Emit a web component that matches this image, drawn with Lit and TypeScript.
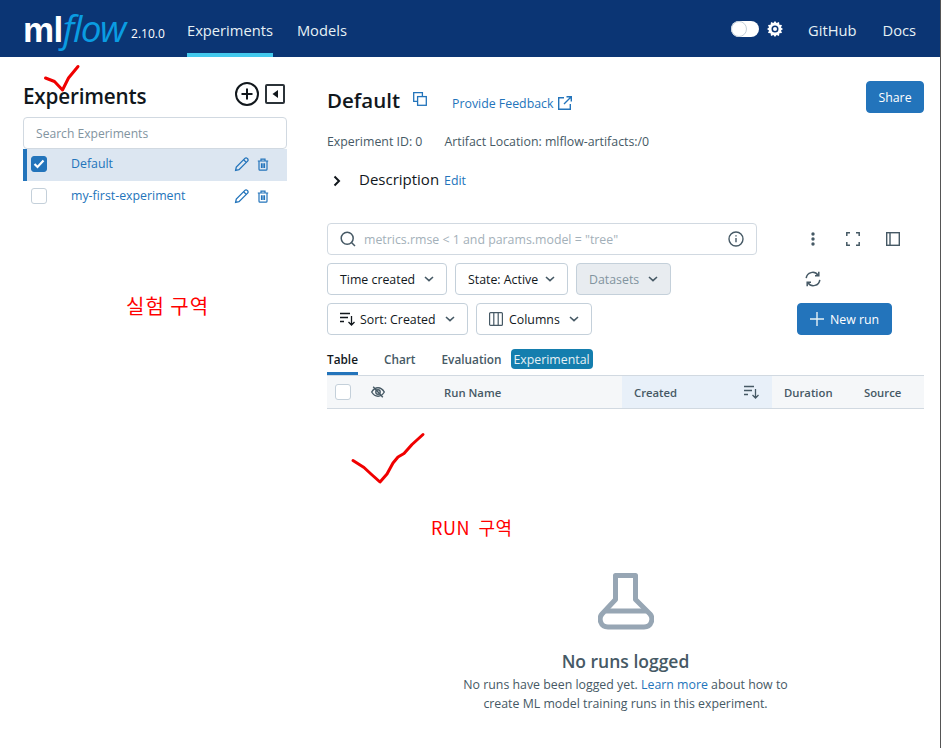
import { LitElement, html, css, svg } from 'lit'
import { customElement } from 'lit/decorators.js'

const chevron = html`<svg class="chev" width="10" height="6" viewBox="0 0 10 6" fill="none" stroke="currentColor" stroke-width="1.6"><path d="M1 1l4 3.6L9 1"/></svg>`

const pencil = html`<svg width="16" height="16" viewBox="0 0 16 16" fill="none" stroke="#2374bb" stroke-width="1.3"><path d="M1.6 14.4l.7-3.4 8.6-8.6a1.6 1.6 0 0 1 2.3 0l.4.4a1.6 1.6 0 0 1 0 2.3L5 13.7z"/><path d="M9.6 3.7l2.7 2.7"/></svg>`

const trash = html`<svg width="12" height="13" viewBox="0 0 12 13" fill="none" stroke="#2374bb" stroke-width="1.2"><path d="M.8 3h10.4M4 3V1.2h4V3M2 3v8.2c0 .6.4 1 1 1h6c.6 0 1-.4 1-1V3M4.500 5.200v4.800M6 5.200v4.800M7.500 5.200v4.800"/></svg>`

const sortIcon = html`<svg width="16" height="14" viewBox="0 0 16 14" fill="none" stroke="#465965" stroke-width="1.3"><path d="M0 1.500h10M0 5.500h8M0 9.500h4M11.500 4v9M8.500 10l3 3 3-3"/></svg>`

@customElement('app-root')
export class AppRoot extends LitElement {
  static styles = css`
    :host {
      display: block;
      position: relative;
      height: 748px;
      overflow: hidden;
      background: #fff;
      border-right: 1px solid #555;
      box-sizing: border-box;
      font-family: 'Open Sans', 'Noto Sans CJK KR', sans-serif;
      font-size: 12.35px;
      color: #11171c;
    }

    /* top bar */
    .topbar {
      display: flex;
      align-items: stretch;
      height: 57px;
      background: #0b3574;
      color: #e6f1f5;
      padding: 0 24px 0 23px;
    }
    .logo {
      width: 164px;
      padding-top: 8px;
      line-height: 40px;
      white-space: nowrap;
    }
    .logo .ml {
      font-family: 'Liberation Sans', sans-serif;
      font-size: 35px;
      font-weight: 700;
      color: #fff;
      letter-spacing: -0.5px;
    }
    .logo .flow {
      font-family: 'Open Sans', sans-serif;
      font-size: 37px;
      font-style: italic;
      font-weight: 400;
      color: #0a9ce2;
      letter-spacing: -1.5px;
      margin-right: 6px;
    }
    .logo .version {
      font-size: 12px;
      color: #fff;
      vertical-align: 4px;
    }
    .nav-item {
      display: flex;
      align-items: center;
      font-size: 14.7px;
      padding-top: 7px;
      border-bottom: 4px solid transparent;
      box-sizing: border-box;
      margin-right: 24px;
    }
    .nav-item.active {
      border-bottom-color: #43c9ed;
    }
    .spacer {
      flex: 1;
    }
    .toggle {
      align-self: center;
      width: 28px;
      height: 16px;
      border-radius: 8px;
      background: #fff;
      margin: 1px 8px 0 0;
      display: flex;
    }
    .toggle i {
      width: 16px;
      height: 16px;
      border-radius: 50%;
      box-sizing: border-box;
      border: 1px solid #c4d0da;
    }
    .gear {
      align-self: center;
      margin: 1px 25px 0 0;
    }
    .topbar .nav-item.github {
      margin-right: 26px;
    }
    .topbar .nav-item:last-child {
      margin-right: 0;
    }

    .body {
      display: flex;
    }

    /* experiment list */
    .sidebar {
      width: 264px;
      margin-left: 23px;
      padding-top: 20px;
      flex: none;
    }
    .side-head {
      display: flex;
      align-items: center;
      height: 34px;
      margin-bottom: 6px;
    }
    .side-head h2 {
      margin: 4px 0 0;
      flex: 1;
      font-size: 20.7px;
      font-weight: 600;
      letter-spacing: -0.2px;
    }
    .side-head svg {
      display: block;
    }
    .side-head .collapse {
      margin: 0 2px 0 6px;
    }
    .side-search {
      height: 32px;
      box-sizing: border-box;
      border: 1px solid #d1d9e1;
      border-radius: 4px;
      padding: 0 12px;
      display: flex;
      align-items: center;
      color: #82949f;
      font-size: 12.1px;
    }
    .exp-row {
      display: flex;
      align-items: center;
      height: 32px;
      padding: 0 0 2px 8px;
      box-sizing: border-box;
      color: #2374bb;
    }
    .exp-row.selected {
      background: #dce6f1;
      border-left: 4px solid #2374bb;
      padding-left: 4px;
    }
    .check {
      width: 16px;
      height: 16px;
      box-sizing: border-box;
      border: 1px solid #c4d0da;
      border-radius: 3px;
      background: #fff;
      flex: none;
      display: flex;
      align-items: center;
      justify-content: center;
    }
    .check.on {
      background: #2374bb;
      border-color: #2374bb;
    }
    .exp-row .name {
      flex: 1;
      margin-left: 24px;
      padding-bottom: 2px;
    }
    .exp-row .edit {
      display: flex;
      align-items: center;
      gap: 7px;
      margin-right: 18px;
    }
    .exp-row svg {
      display: block;
    }

    /* runs area */
    .main {
      flex: 1;
      margin: 0 16px 0 40px;
      min-width: 0;
    }
    .title-row {
      display: flex;
      align-items: center;
      height: 32px;
      margin-top: 24px;
    }
    .title-row h1 {
      margin: 6px 13px 0 0;
      font-size: 20.5px;
      font-weight: 600;
    }
    .title-row .copy {
      margin-top: 4px;
    }
    .feedback {
      display: flex;
      align-items: center;
      gap: 5px;
      margin: 12px 0 0 25px;
      color: #2374bb;
      flex: 1;
    }
    .btn {
      display: inline-flex;
      align-items: center;
      height: 32px;
      box-sizing: border-box;
      border: 1px solid #c4d0da;
      border-radius: 4px;
      padding: 0 12px;
      background: #fff;
      color: #11171c;
      white-space: nowrap;
    }
    .btn.primary {
      background: #2374bb;
      border-color: #2374bb;
      color: #fff;
      justify-content: center;
    }
    .btn.share {
      width: 58px;
      padding: 0;
    }
    .btn.disabled {
      background: #e8ecf0;
      color: #82949f;
    }
    .btn .chev {
      margin-left: auto;
      color: #465965;
    }
    .btn .lead {
      margin-right: 4px;
    }
    .btn .lead.wide {
      margin-right: 6px;
    }
    .w-time { width: 120px; }
    .w-state { width: 113px; }
    .w-data { width: 95px; }
    .w-sort { width: 141px; }
    .w-cols { width: 116px; }
    .meta {
      display: flex;
      gap: 22px;
      margin-top: 20px;
      color: #465965;
      height: 18px;
      line-height: 18px;
    }
    .desc {
      display: flex;
      align-items: baseline;
      margin: 18px 0 0 6px;
      height: 24px;
      font-size: 15px;
    }
    .desc svg {
      margin-right: 18px;
      align-self: center;
    }
    .desc a {
      font-size: 12.35px;
      color: #2374bb;
      margin-left: 5px;
    }

    .controls {
      display: flex;
      margin-top: 30px;
    }
    .filters {
      width: 430px;
      display: flex;
      flex-direction: column;
      gap: 8px;
    }
    .filter-row {
      display: flex;
      gap: 8px;
    }
    .searchbox {
      display: flex;
      align-items: center;
      height: 32px;
      box-sizing: border-box;
      border: 1px solid #d1d9e1;
      border-radius: 4px;
      padding: 0 12px;
      color: #a3b0b9;
    }
    .searchbox span {
      flex: 1;
      margin-left: 8px;
    }
    .tools {
      width: 95px;
      margin-left: 40px;
      display: flex;
      flex-direction: column;
      gap: 8px;
    }
    .tool-row {
      display: flex;
      align-items: center;
      height: 32px;
      margin-left: -4px;
    }
    .tool-row .slot {
      width: 40px;
      flex: none;
      display: flex;
      justify-content: center;
    }
    .tool-row svg {
      display: block;
    }
    .tools .btn {
      width: 95px;
      padding: 0;
    }
    .tools .btn .lead {
      margin-right: 6px;
    }

    .tabs {
      display: flex;
      align-items: flex-start;
      height: 26px;
      margin-top: 14px;
      color: #465965;
      font-weight: 600;
      font-size: 11.8px;
      line-height: 21px;
    }
    .tab {
      height: 26px;
      box-sizing: border-box;
      margin-right: 26px;
    }
    .tab.active {
      color: #11171c;
      border-bottom: 3px solid #2374bb;
    }
    .tab.eval {
      margin-right: 9px;
    }
    .badge {
      height: 20px;
      width: 82px;
      background: #147eae;
      color: #e6f1f5;
      border-radius: 4px;
      font-weight: 400;
      font-size: 12.35px;
      text-align: center;
    }

    .table-head {
      display: flex;
      align-items: center;
      height: 34px;
      box-sizing: border-box;
      background: #f5f7f9;
      border-top: 1px solid #d1d9e1;
      border-bottom: 1px solid #d1d9e1;
      color: #465965;
      font-weight: 600;
      font-size: 11.3px;
    }
    .table-head .check {
      margin-left: 8px;
    }
    .eye {
      margin-left: 20px;
      width: 73px;
    }
    .eye svg {
      display: block;
    }
    .col-name {
      width: 178px;
    }
    .col-created {
      display: flex;
      align-items: center;
      justify-content: space-between;
      align-self: stretch;
      width: 150px;
      box-sizing: border-box;
      padding: 0 12px;
      background: #e8f0f9;
    }
    .col-duration {
      width: 80px;
      margin-left: 12px;
    }

    .empty {
      display: flex;
      flex-direction: column;
      align-items: center;
      margin-top: 164px;
      text-align: center;
      color: #465965;
    }
    .empty svg {
      display: block;
    }
    .empty h3 {
      margin: 19px 0 0;
      font-size: 17.5px;
      font-weight: 600;
      line-height: 24px;
    }
    .empty p {
      margin: 2px 0 0;
      line-height: 19px;
      width: 340px;
    }
    .empty a {
      color: #2374bb;
    }

    /* hand-drawn notes over the screenshot */
    .ink {
      position: absolute;
      left: 0;
      top: 0;
      pointer-events: none;
    }
    .note {
      position: absolute;
      color: #ff0000;
      font-family: 'Noto Sans CJK KR', sans-serif;
      white-space: nowrap;
    }
    .note.exp {
      left: 126px;
      top: 292px;
      font-size: 20px;
      line-height: 28px;
      letter-spacing: 1px;
    }
    .note.run {
      left: 431px;
      top: 514px;
      font-size: 18px;
      line-height: 26px;
      letter-spacing: 0.5px;
      word-spacing: 4px;
    }
  `

  private _experiment(name: string, selected: boolean) {
    return html`
      <div class="exp-row ${selected ? 'selected' : ''}">
        <div class="check ${selected ? 'on' : ''}">
          ${selected ? html`<svg width="12" height="10" viewBox="0 0 12 10" fill="none" stroke="#fff" stroke-width="2.2"><path d="M1.500 5l3 3 6-6.500"/></svg>` : ''}
        </div>
        <div class="name">${name}</div>
        <div class="edit">${pencil}${trash}</div>
      </div>
    `
  }

  render() {
    return html`
      <div class="topbar">
        <div class="logo"><span class="ml">ml</span><span class="flow">flow</span><span class="version">2.10.0</span></div>
        <div class="nav-item active">Experiments</div>
        <div class="nav-item">Models</div>
        <div class="spacer"></div>
        <div class="toggle"><i></i></div>
        <svg class="gear" width="16" height="16" viewBox="0 0 16 16">
          <path fill="#fff" fill-rule="evenodd" d="M8 0l1.600 2.100 2.400-1 .4 2.600 2.600.4-1 2.400L16 8l-2 1.500 1 2.400-2.600.4-.4 2.600-2.400-1L8 16l-1.600-2.100-2.400 1-.4-2.600-2.600-.4 1-2.400L0 8l2-1.500-1-2.400 2.600-.4.4-2.600 2.400 1zM8 4.500a3.500 3.500 0 1 0 0 7 3.500 3.500 0 0 0 0-7z"/>
          <circle cx="8" cy="8" r="2" fill="#fff"/>
        </svg>
        <div class="nav-item github">GitHub</div>
        <div class="nav-item">Docs</div>
      </div>

      <div class="body">
        <div class="sidebar">
          <div class="side-head">
            <h2>Experiments</h2>
            <svg width="24" height="24" viewBox="0 0 24 24" fill="none" stroke="#11171c" stroke-width="2"><circle cx="12" cy="12" r="11"/><path d="M12 6.500v11M6.500 12h11"/></svg>
            <svg class="collapse" width="20" height="20" viewBox="0 0 20 20" fill="none"><rect x="1" y="1" width="18" height="18" rx="1" stroke="#2b3238" stroke-width="2"/><path d="M13 6v8l-5.500-4z" fill="#11171c"/></svg>
          </div>
          <div class="side-search">Search Experiments</div>
          ${this._experiment('Default', true)}
          ${this._experiment('my-first-experiment', false)}
        </div>

        <div class="main">
          <div class="title-row">
            <h1>Default</h1>
            <svg class="copy" width="14" height="14" viewBox="0 0 14 14" fill="none" stroke="#2374bb" stroke-width="1.3"><rect x="4.600" y="4.600" width="8.700" height="8.700"/><path d="M4.600 9.400H.7V.7h8.700v3.900"/></svg>
            <div class="feedback">
              Provide Feedback
              <svg width="14" height="14" viewBox="0 0 14 14" fill="none" stroke="#2374bb" stroke-width="1.4"><path d="M6 1.700H.7v11.600h11.600V8M8.500.7h4.800v4.800M13 1L6 8"/></svg>
            </div>
            <div class="btn primary share">Share</div>
          </div>
          <div class="meta"><span>Experiment ID: 0</span><span>Artifact Location: mlflow-artifacts:/0</span></div>
          <div class="desc">
            <svg width="8" height="12" viewBox="0 0 8 12" fill="none" stroke="#11171c" stroke-width="2"><path d="M1.500 1.500L6 6l-4.500 4.500"/></svg>
            Description <a>Edit</a>
          </div>

          <div class="controls">
            <div class="filters">
              <div class="searchbox">
                <svg width="16" height="16" viewBox="0 0 16 16" fill="none" stroke="#465965" stroke-width="1.5"><circle cx="7.200" cy="7.200" r="6"/><path d="M11.500 11.500L15 15"/></svg>
                <span>metrics.rmse &lt; 1 and params.model = "tree"</span>
                <svg width="16" height="16" viewBox="0 0 16 16" fill="none" stroke="#465965" stroke-width="1.4"><circle cx="8" cy="8" r="7"/><path d="M8 7v4.200M8 4.200v1.400"/></svg>
              </div>
              <div class="filter-row">
                <div class="btn w-time">Time created ${chevron}</div>
                <div class="btn w-state">State: Active ${chevron}</div>
                <div class="btn disabled w-data">Datasets ${chevron}</div>
              </div>
              <div class="filter-row">
                <div class="btn w-sort">
                  <svg class="lead" width="16" height="14" viewBox="0 0 16 14" fill="none" stroke="#11171c" stroke-width="1.3"><path d="M0 1.500h10M0 5.500h8M0 9.500h4M11.500 4v9M8.500 10l3 3 3-3"/></svg>
                  Sort: Created ${chevron}
                </div>
                <div class="btn w-cols">
                  <svg class="lead wide" width="14" height="14" viewBox="0 0 14 14" fill="none" stroke="#465965" stroke-width="1.2"><rect x=".6" y=".6" width="12.800" height="12.800" rx="1"/><path d="M4.800 .6v12.800M9.200 .6v12.800"/></svg>
                  Columns ${chevron}
                </div>
              </div>
            </div>

            <div class="tools">
              <div class="tool-row">
                <div class="slot"><svg width="4" height="14" viewBox="0 0 4 14" fill="#465965"><circle cx="2" cy="2" r="1.700"/><circle cx="2" cy="7" r="1.700"/><circle cx="2" cy="12" r="1.700"/></svg></div>
                <div class="slot"><svg width="14" height="14" viewBox="0 0 14 14" fill="none" stroke="#465965" stroke-width="1.5"><path d="M.8 4V.8H4M10 .8h3.200V4M13.200 10v3.200H10M4 13.200H.8V10"/></svg></div>
                <div class="slot"><svg width="14" height="14" viewBox="0 0 14 14" fill="none" stroke="#465965" stroke-width="1.4"><rect x=".7" y=".7" width="12.600" height="12.600"/><path d="M4 .7v12.600"/></svg></div>
              </div>
              <div class="tool-row">
                <div class="slot"><svg width="16" height="16" viewBox="0 0 16 16" fill="none" stroke="#465965" stroke-width="1.5"><path d="M1.200 7.200A6.500 6.500 0 0 1 13 4.200M14.800 8.800A6.500 6.500 0 0 1 3 11.800"/><path d="M13.800 .8v3.900H10M2.200 15.200v-3.900H6"/></svg></div>
              </div>
              <div class="btn primary">
                <svg class="lead" width="14" height="14" viewBox="0 0 14 14" fill="none" stroke="#e6f1f5" stroke-width="1.4"><path d="M7 0v14M0 7h14"/></svg>
                New run
              </div>
            </div>
          </div>

          <div class="tabs">
            <div class="tab active">Table</div>
            <div class="tab">Chart</div>
            <div class="tab eval">Evaluation</div>
            <div class="badge">Experimental</div>
          </div>

          <div class="table-head">
            <div class="check"></div>
            <div class="eye">
              <svg width="14" height="12" viewBox="0 0 14 12" fill="none" stroke="#465965" stroke-width="1.4"><path d="M.7 6C2.400 3.200 4.500 1.800 7 1.800s4.600 1.400 6.300 4.200c-1.700 2.800-3.800 4.200-6.300 4.200S2.400 8.800.7 6z"/><circle cx="7" cy="6" r="2.200"/><path d="M2.200 .7l9.600 10.600"/></svg>
            </div>
            <div class="col-name">Run Name</div>
            <div class="col-created">Created ${sortIcon}</div>
            <div class="col-duration">Duration</div>
            <div>Source</div>
          </div>

          <div class="empty">
            <svg width="56" height="57" viewBox="0 0 56 57" fill="none" stroke="#97a6b4" stroke-width="5" stroke-linejoin="round"><path d="M17.500 2.500h20v24L52 41c3.500 4 2 13-6 13H10c-8 0-9.500-9-6-13l13.500-14.500z"/><path d="M8 38h40"/></svg>
            <h3>No runs logged</h3>
            <p>No runs have been logged yet. <a>Learn more</a> about how to create ML model training runs in this experiment.</p>
          </div>
        </div>
      </div>

      <svg class="ink" width="941" height="748" fill="none" stroke="#f00000" stroke-width="3" stroke-linecap="round" stroke-linejoin="round">
        ${svg`<path d="M45.500 78l9 3.500 8 8.500 6-12 9.500-11.500"/>`}
        ${svg`<path d="M353 460.500l11 7 7 6.500 9 8 7-8 6-11 5-6 6-3.500 8-9 11-10"/>`}
      </svg>
      <div class="note exp">실험 구역</div>
      <div class="note run">RUN 구역</div>
    `
  }
}

declare global {
  interface HTMLElementTagNameMap {
    'app-root': AppRoot
  }
}
